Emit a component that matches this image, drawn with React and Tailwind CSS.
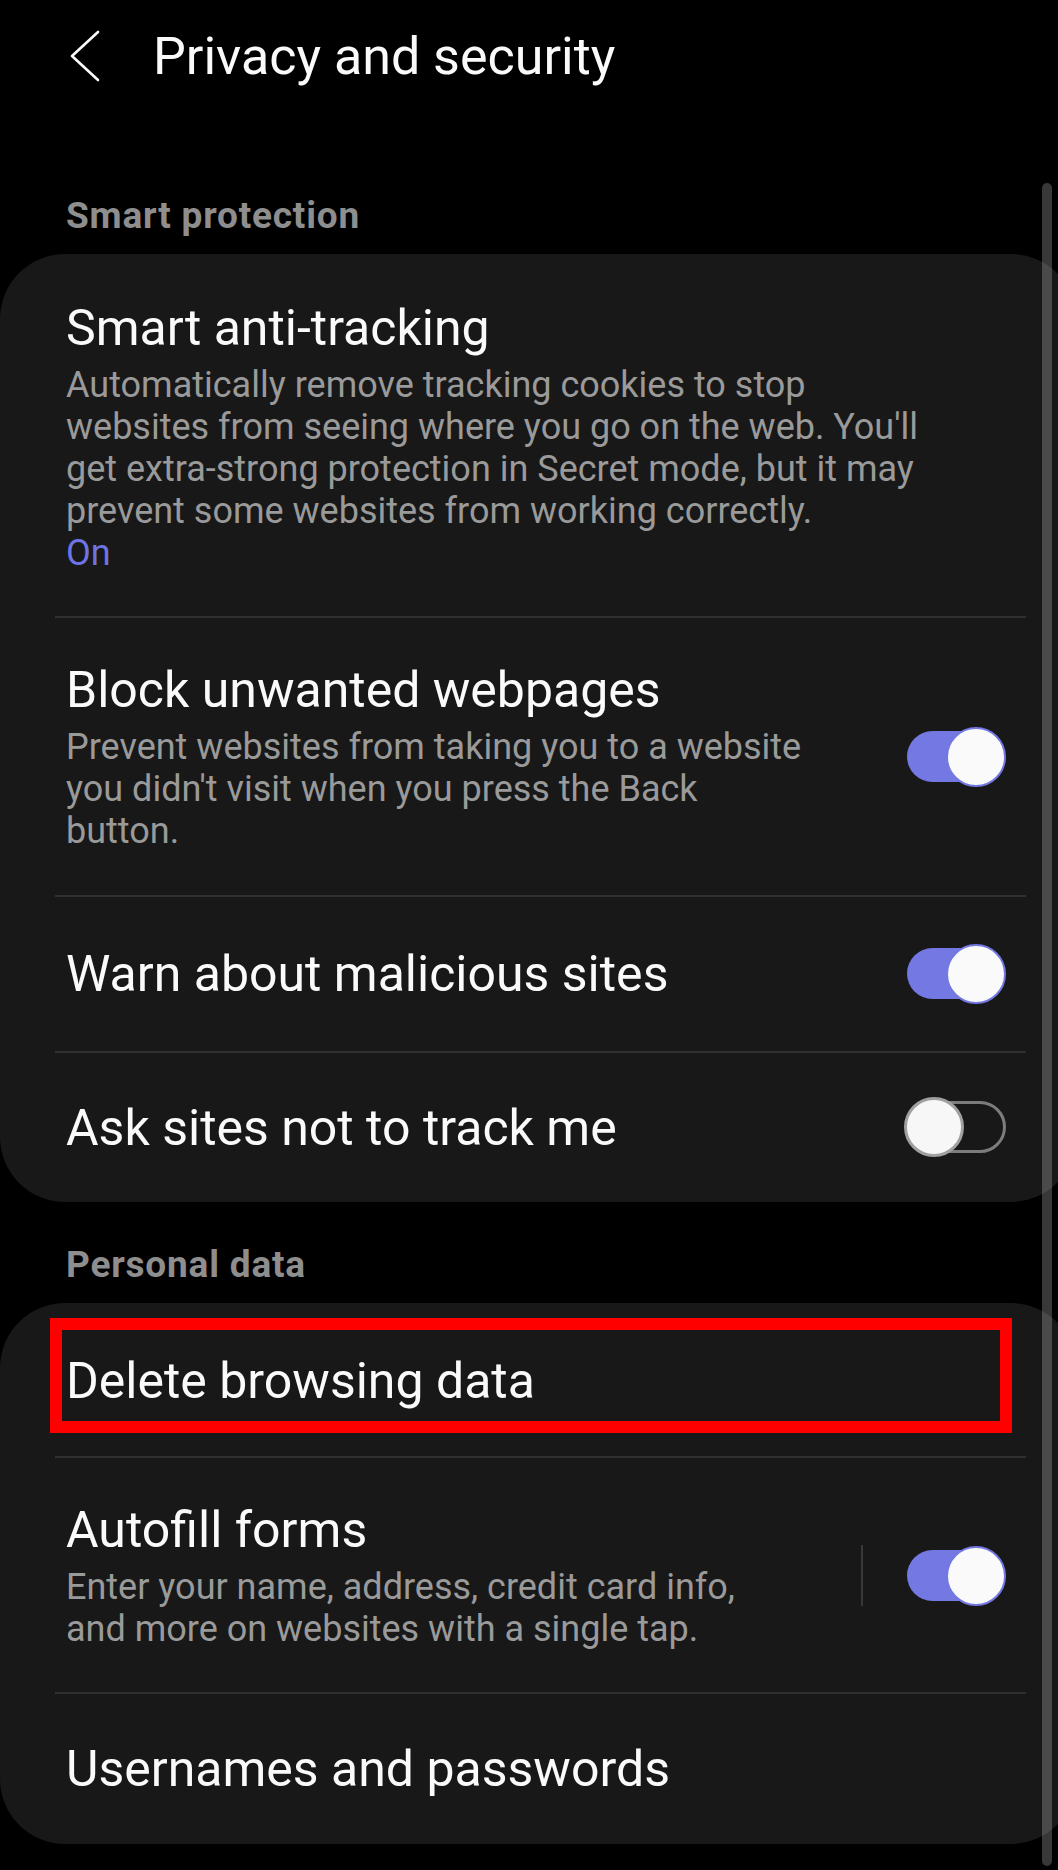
const font = { fontFamily: "Roboto, 'Noto Sans', sans-serif" };

function Toggle({ on }) {
  if (on) {
    return (
      <div className="relative w-[102px] h-[60px] shrink-0">
        <div className="absolute left-[3px] top-[4px] w-[92px] h-[51px] rounded-full bg-[#7378e2]" />
        <div className="absolute right-0 top-0 w-[60px] h-[60px] rounded-full border-2 border-[#7378e2] bg-[#fafafa]" />
      </div>
    );
  }
  return (
    <div className="relative w-[102px] h-[60px] shrink-0">
      <div className="absolute left-[8px] right-0 top-[4px] h-[52px] rounded-full border-[3px] border-[#7c7c7c]" />
      <div className="absolute left-0 top-0 w-[60px] h-[60px] rounded-full border-[3px] border-[#a0a0a0] bg-[#f7f7f7]" />
    </div>
  );
}

function Divider() {
  return <div className="ml-[55px] mr-[50px] h-[2px] bg-[#303030]" />;
}

function Title({ children }) {
  return <div className="text-[50px] leading-[58px] text-[#fafafa] whitespace-nowrap">{children}</div>;
}

function Desc({ lines }) {
  return (
    <div className="mt-[7px] text-[36px] leading-[42px] text-[#9a9a9a] whitespace-nowrap">
      {lines.map((l, i) => (
        <div key={i}>{l}</div>
      ))}
    </div>
  );
}

function Label({ children, className }) {
  return (
    <div className={"pl-[66px] text-[37px] leading-[44px] tracking-[0.8px] font-bold text-[#8e8e8e] " + className}>
      {children}
    </div>
  );
}

export default function App() {
  return (
    <div className="relative w-[1058px] h-[1870px] bg-black overflow-hidden" style={font}>
      {/* header */}
      <div className="flex items-start pt-[27px] pl-[70px]">
        <svg width="30" height="52" viewBox="0 0 30 52" className="mt-[3px] shrink-0">
          <polyline points="28,2 2,26 28,50" fill="none" stroke="#fafafa" strokeWidth="2.6" strokeLinecap="round" strokeLinejoin="round" />
        </svg>
        <div className="ml-[53px] text-[52px] leading-[60px] text-[#fafafa]">Privacy and security</div>
      </div>

      <Label className="mt-[107px] mb-[16px]">Smart protection</Label>

      <div className="bg-[#181818] rounded-[65px] mr-[-18px]">
        <div className="pl-[66px] pr-[70px] pt-[45px] pb-[42px]">
          <Title>Smart anti-tracking</Title>
          <Desc
            lines={[
              "Automatically remove tracking cookies to stop",
              "websites from seeing where you go on the web. You'll",
              "get extra-strong protection in Secret mode, but it may",
              "prevent some websites from working correctly.",
            ]}
          />
          <div className="text-[36px] leading-[42px] text-[#6e74e3]">On</div>
        </div>
        <Divider />
        <div className="flex items-center justify-between pl-[66px] pr-[70px] pt-[43px] pb-[43px]">
          <div>
            <Title>Block unwanted webpages</Title>
            <Desc
              lines={[
                "Prevent websites from taking you to a website",
                "you didn't visit when you press the Back",
                "button.",
              ]}
            />
          </div>
          <Toggle on />
        </div>
        <Divider />
        <div className="flex items-center justify-between pl-[66px] pr-[70px] py-[47px]">
          <Title>Warn about malicious sites</Title>
          <Toggle on />
        </div>
        <Divider />
        <div className="flex items-center justify-between pl-[66px] pr-[70px] pt-[46px] pb-[45px]">
          <Title>Ask sites not to track me</Title>
          <div className="-mt-[2px]">
            <Toggle on={false} />
          </div>
        </div>
      </div>

      <Label className="mt-[41px] mb-[16px]">Personal data</Label>

      <div className="bg-[#181818] rounded-[65px] mr-[-18px]">
        <div className="relative pl-[66px] pr-[70px] pt-[49px] pb-[46px]">
          <Title>Delete browsing data</Title>
          <div className="absolute left-[50px] right-[64px] top-[15px] bottom-[23px] border-[12px] border-[#ff0000]" />
        </div>
        <Divider />
        <div className="flex items-center justify-between pl-[66px] pr-[70px] pt-[43px] pb-[42px]">
          <div>
            <Title>Autofill forms</Title>
            <Desc
              lines={[
                "Enter your name, address, credit card info,",
                "and more on websites with a single tap.",
              ]}
            />
          </div>
          <div className="flex items-center">
            <div className="w-[2px] h-[61px] bg-[#383838] mr-[41px]" />
            <Toggle on />
          </div>
        </div>
        <Divider />
        <div className="pl-[66px] pr-[70px] pt-[46px] pb-[46px]">
          <Title>Usernames and passwords</Title>
        </div>
      </div>

      {/* scrollbar */}
      <div className="absolute right-[6px] top-[183px] bottom-[4px] w-[10px] rounded-full bg-[rgba(255,255,255,0.22)]" />
    </div>
  );
}
